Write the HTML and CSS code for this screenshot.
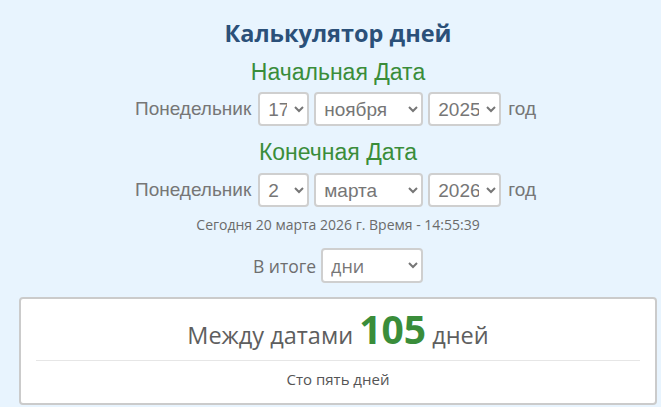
FILE: index.html
```html
<!DOCTYPE html>
<html lang="ru">
<head>
<meta charset="utf-8">
<title>Калькулятор дней</title>
<link rel="stylesheet" href="styles.css">
</head>
<body>
<div class="page">
  <h1 class="title">Калькулятор дней</h1>
  <div class="subtitle sub-start">Начальная Дата</div>
  <div class="row row-start">
    <span class="label">Понедельник</span>
    <select class="sel sel-day"><option>17</option></select>
    <select class="sel sel-month"><option>ноября</option></select>
    <select class="sel sel-year"><option>2025</option></select>
    <span class="label">год</span>
  </div>
  <div class="subtitle sub-end">Конечная Дата</div>
  <div class="row row-end">
    <span class="label">Понедельник</span>
    <select class="sel sel-day"><option>2</option></select>
    <select class="sel sel-month"><option>марта</option></select>
    <select class="sel sel-year"><option>2026</option></select>
    <span class="label">год</span>
  </div>
  <div class="today">Сегодня 20 марта 2026 г. Время - 14:55:39</div>
  <div class="row total">
    <span class="label-os">В итоге</span>
    <select class="sel sel-unit"><option>дни</option></select>
  </div>
  <div class="card">
    <div class="result">Между датами <span class="num">105</span> дней</div>
    <div class="words">Сто пять дней</div>
  </div>
</div>
</body>
</html>
```
FILE: styles.css
```css
html, body {
  margin: 0;
  padding: 0;
  background: #e8f4fe;
}
.page {
  padding: 16px 4px 0 19px;
  display: flex;
  flex-direction: column;
  align-items: center;
}
.title {
  margin: 0;
  font-family: "Open Sans", sans-serif;
  font-weight: 700;
  font-size: 23.5px;
  line-height: 34px;
  color: #2b5079;
}
.subtitle {
  font-family: "Liberation Sans", Arial, sans-serif;
  font-size: 23px;
  line-height: 28px;
  color: #3a8d3a;
}
.sub-start { margin-top: 8px; }
.sub-end { margin-top: 12px; }
.row {
  display: flex;
  align-items: center;
  gap: 5px;
  height: 34px;
}
.row-start, .row-end { margin-right: 5px; }
.row-start { margin-top: 6px; }
.row-end { margin-top: 7px; }
.label {
  font-family: "Liberation Sans", Arial, sans-serif;
  font-size: 19px;
  color: #767676;
  margin: 0 2px;
}
.sel {
  font-family: "Liberation Sans", Arial, sans-serif;
  font-size: 19px;
  color: #767676;
  background: #fff;
  border: 2px solid #cfcfcf;
  border-radius: 4px;
  height: 34px;
  padding: 0 4px;
}
.sel-day { width: 51px; }
.sel-month { width: 109px; }
.sel-year { width: 73px; }
.sel-unit {
  width: 102px;
  font-family: "Open Sans", sans-serif;
  font-size: 18px;
  height: 35px;
}
.today {
  margin-top: 9px;
  font-family: "Open Sans", sans-serif;
  font-size: 14px;
  line-height: 18px;
  color: #6b6b6b;
}
.total {
  margin-top: 14px;
  height: 35px;
}
.label-os {
  font-family: "Open Sans", sans-serif;
  font-size: 17.5px;
  color: #6e6e6e;
}
.card {
  align-self: stretch;
  margin-top: 14px;
  background: #fff;
  border: 2px solid #cbcbcb;
  border-radius: 4px;
  padding: 10px 15px 14px;
  display: flex;
  flex-direction: column;
  align-items: center;
}
.result {
  align-self: stretch;
  text-align: center;
  font-family: "Open Sans", sans-serif;
  font-size: 23.5px;
  line-height: 40px;
  color: #5e5e5e;
  border-bottom: 1px solid #e6e6e6;
  padding-bottom: 5px;
}
.num {
  font-size: 39px;
  line-height: 40px;
  font-weight: 700;
  color: #3a8d3a;
}
.words {
  margin-top: 8px;
  font-family: "Open Sans", sans-serif;
  font-size: 15px;
  line-height: 20px;
  color: #555;
}
```
